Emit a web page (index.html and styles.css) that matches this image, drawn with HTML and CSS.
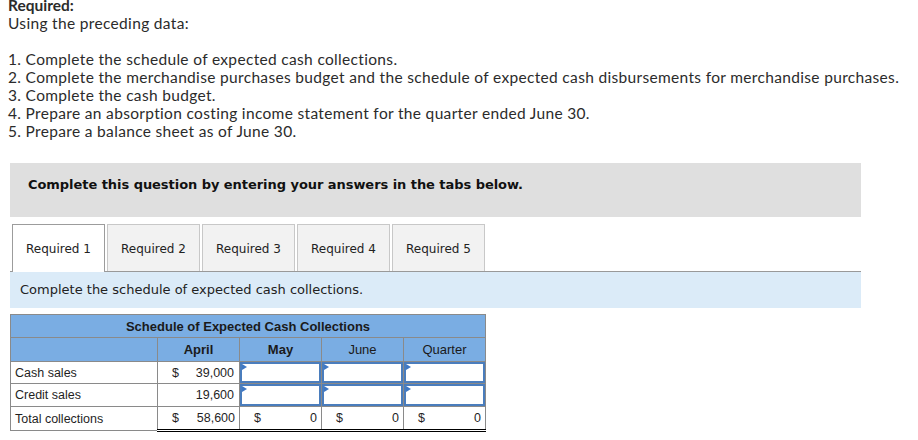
FILE: index.html
```html
<!DOCTYPE html>
<html>
<head>
<meta charset="utf-8">
<link rel="stylesheet" href="styles.css">
</head>
<body>
<div class="page">
  <div class="intro">
    <div class="req-title">Required:</div>
    <div>Using the preceding data:</div>
    <div class="blank">&nbsp;</div>
    <div>1. Complete the schedule of expected cash collections.</div>
    <div>2. Complete the merchandise purchases budget and the schedule of expected cash disbursements for merchandise purchases.</div>
    <div>3. Complete the cash budget.</div>
    <div>4. Prepare an absorption costing income statement for the quarter ended June 30.</div>
    <div>5. Prepare a balance sheet as of June 30.</div>
  </div>

  <div class="question">
    <div class="notice">Complete this question by entering your answers in the tabs below.</div>
    <div class="tabs">
      <div class="tab active">Required 1</div>
      <div class="tab">Required 2</div>
      <div class="tab">Required 3</div>
      <div class="tab">Required 4</div>
      <div class="tab">Required 5</div>
    </div>
    <div class="instruction">Complete the schedule of expected cash collections.</div>

    <table class="sched">
      <colgroup>
        <col class="c-label"><col class="c-num"><col class="c-num"><col class="c-num"><col class="c-num">
      </colgroup>
      <tr class="title-row"><th colspan="5">Schedule of Expected Cash Collections</th></tr>
      <tr class="head-row">
        <th></th>
        <th class="b">April</th>
        <th class="b">May</th>
        <th>June</th>
        <th>Quarter</th>
      </tr>
      <tr class="r1">
        <td class="label">Cash sales</td>
        <td class="money"><div class="mv"><span>$</span><span>39,000</span></div></td>
        <td class="inp"><div class="box"></div></td>
        <td class="inp"><div class="box"></div></td>
        <td class="inp"><div class="box"></div></td>
      </tr>
      <tr class="r2">
        <td class="label">Credit sales</td>
        <td class="money"><div class="mv end"><span>19,600</span></div></td>
        <td class="inp"><div class="box"></div></td>
        <td class="inp"><div class="box"></div></td>
        <td class="inp"><div class="box"></div></td>
      </tr>
      <tr class="total">
        <td class="label">Total collections</td>
        <td class="money"><div class="mv"><span>$</span><span>58,600</span></div></td>
        <td class="money"><div class="mv"><span>$</span><span>0</span></div></td>
        <td class="money"><div class="mv"><span>$</span><span>0</span></div></td>
        <td class="money"><div class="mv"><span>$</span><span>0</span></div></td>
      </tr>
    </table>
  </div>
</div>
</body>
</html>
```

FILE: styles.css
```css
html, body {
  margin: 0;
  padding: 0;
  background: #ffffff;
}

.page {
  padding-left: 8px;
}

.intro {
  font-family: "Lato", "Open Sans", sans-serif;
  font-size: 15.5px;
  letter-spacing: 0.33px;
  line-height: 18px;
  color: #2b2b2b;
  margin-top: -4px;
}

.req-title {
  font-weight: bold;
  letter-spacing: 0;
}

.question {
  margin-left: 2px;
  width: 851px;
  margin-top: 23px;
}

.notice {
  background: #dfdfdf;
  height: 54px;
  box-sizing: border-box;
  padding: 14px 0 0 18px;
  font-family: "DejaVu Sans", Verdana, sans-serif;
  font-weight: bold;
  font-size: 13px;
  letter-spacing: -0.05px;
  line-height: 16px;
  color: #111;
}

.tabs {
  display: flex;
  gap: 2px;
  margin-top: 7px;
  padding-left: 2px;
  border-bottom: 1px solid #999;
  height: 47px;
}

.tab {
  width: 93px;
  height: 47px;
  box-sizing: border-box;
  border: 1px solid #c8c8c8;
  border-bottom: none;
  background: #f2f2f2;
  font-family: "DejaVu Sans", Verdana, sans-serif;
  font-size: 12px;
  color: #222;
  display: flex;
  align-items: center;
  justify-content: center;
  padding-top: 1px;
}

.tab.active {
  background: #ffffff;
  border-color: #9c9c9c;
  height: 48px;
  margin-bottom: -1px;
}

.instruction {
  background: #dbebf8;
  height: 36px;
  box-sizing: border-box;
  padding: 10px 0 0 10px;
  font-family: "DejaVu Sans", Verdana, sans-serif;
  font-size: 13px;
  line-height: 16px;
  color: #222;
}

.sched {
  margin-top: 6px;
  border-collapse: collapse;
  font-family: "Liberation Sans", Arial, sans-serif;
  font-size: 12.5px;
  color: #1f1f1f;
  table-layout: fixed;
  width: 476px;
}

.c-label { width: 147px; }
.c-num { width: 82px; }

.sched th, .sched td {
  border: 1px solid #8a8a8a;
  padding: 0;
}

.sched th {
  background: #7aade3;
  font-weight: normal;
  text-align: center;
  color: #1a1a1a;
}

.title-row th {
  font-weight: bold;
  height: 22px;
  font-size: 13px;
}

.head-row th {
  height: 23px;
  font-size: 13px;
}

.head-row th.b {
  font-weight: bold;
}

.r1 td {
  height: 21px;
}

.r2 td, .total td {
  height: 22px;
}

.label {
  padding-left: 4px !important;
  text-align: left;
}

.mv {
  display: flex;
  justify-content: space-between;
  padding: 0 5px 0 14px;
}

.mv.end {
  justify-content: flex-end;
}

.total td.money {
  border-top: 1px solid #000;
  border-bottom: 3px double #000;
}

.total .mv {
  padding-right: 4px;
}

.sched td.inp {
  position: relative;
  padding: 0;
}

.box {
  position: relative;
  height: 21px;
  box-sizing: border-box;
  border: 2px solid #4a7dbd;
  background: #fff;
}

.r2 .box {
  height: 22px;
}

.box::before {
  content: "";
  position: absolute;
  left: 0;
  top: 0;
  border-top: 3px solid transparent;
  border-bottom: 3px solid transparent;
  border-left: 5px solid #3f78c4;
}
```
